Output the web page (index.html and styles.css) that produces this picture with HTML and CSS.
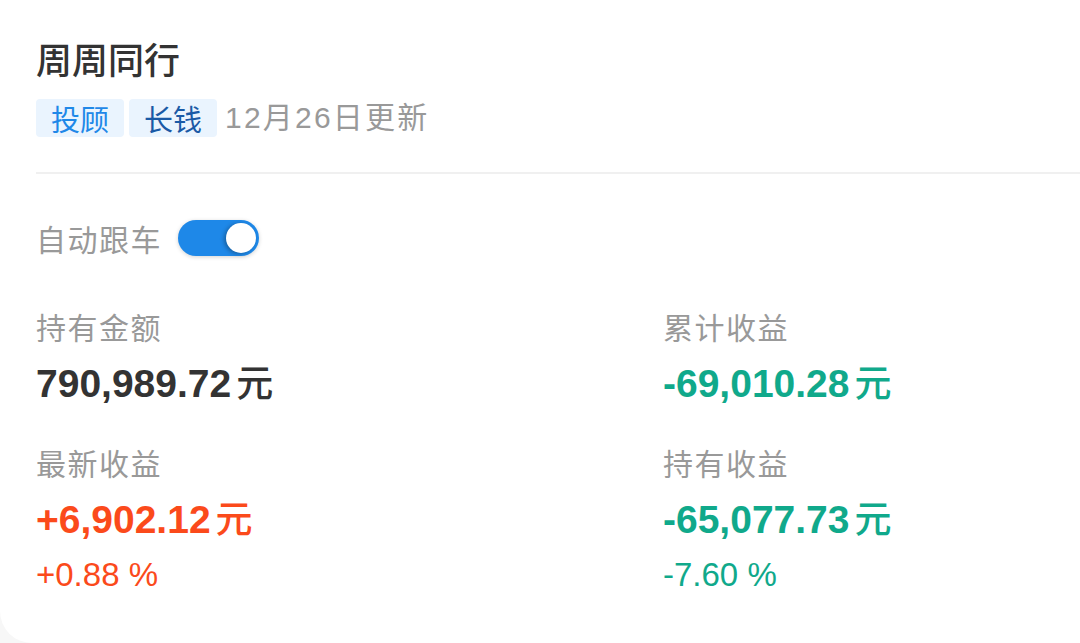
FILE: index.html
```html
<!DOCTYPE html>
<html lang="zh-CN">
<head>
<meta charset="utf-8">
<title>周周同行</title>
<link rel="stylesheet" href="styles.css">
</head>
<body>
<div class="card">
  <h1 class="title">周周同行</h1>
  <div class="meta">
    <span class="tag tag-blue">投顾</span>
    <span class="tag tag-navy">长钱</span>
    <span class="date">12月26日更新</span>
  </div>
  <div class="divider"></div>
  <div class="auto-row">
    <span class="label">自动跟车</span>
    <span class="switch"><span class="knob"></span></span>
  </div>
  <div class="stats">
    <div class="stat">
      <div class="label">持有金额</div>
      <div class="value dark">790,989.72<span class="unit">元</span></div>
    </div>
    <div class="stat">
      <div class="label">累计收益</div>
      <div class="value green">-69,010.28<span class="unit">元</span></div>
    </div>
    <div class="stat">
      <div class="label">最新收益</div>
      <div class="value red">+6,902.12<span class="unit">元</span></div>
      <div class="pct red">+0.88 %</div>
    </div>
    <div class="stat">
      <div class="label">持有收益</div>
      <div class="value green">-65,077.73<span class="unit">元</span></div>
      <div class="pct green">-7.60 %</div>
    </div>
  </div>
</div>
</body>
</html>
```
FILE: styles.css
```css
html, body {
  margin: 0;
  padding: 0;
}
body {
  background: #f7f7f7;
  font-family: "Liberation Sans", "Noto Sans CJK SC", sans-serif;
}
.card {
  box-sizing: border-box;
  width: 1080px;
  height: 643px;
  background: #ffffff;
  border-radius: 0 0 0 32px;
  padding: 40px 0 0 36px;
}
.title {
  margin: 0;
  font-family: "Noto Sans CJK SC", sans-serif;
  font-size: 36px;
  line-height: 1;
  font-weight: 500;
  color: #333333;
}
.meta {
  display: flex;
  align-items: center;
  margin-top: 23px;
}
.tag {
  display: inline-block;
  font-family: "Noto Sans CJK SC", sans-serif;
  font-size: 29px;
  line-height: 38px;
  height: 38px;
  padding: 0 15px;
  background: #eaf4fe;
  border-radius: 4px;
  margin-right: 5px;
}
.tag-blue { color: #1f88e8; }
.tag-navy { color: #1a5aa6; }
.date {
  margin-left: 3px;
  font-family: "Liberation Sans", "Noto Sans CJK SC", sans-serif;
  font-size: 30px;
  letter-spacing: 2.2px;
  color: #999999;
  line-height: 38px;
}
.divider {
  height: 2px;
  background: #f0f0f0;
  margin-top: 35px;
}
.auto-row {
  display: flex;
  align-items: center;
  margin-top: 46px;
  height: 36px;
}
.label {
  font-family: "Noto Sans CJK SC", sans-serif;
  font-size: 30px;
  line-height: 30px;
  letter-spacing: 1.5px;
  color: #999999;
}
.switch {
  box-sizing: border-box;
  display: flex;
  align-items: center;
  justify-content: flex-end;
  width: 81px;
  height: 36px;
  margin-left: 16px;
  padding: 0 3px;
  border-radius: 18px;
  background: #1e88e8;
  box-shadow: 0 1px 4px rgba(0, 0, 0, 0.18);
}
.knob {
  width: 30px;
  height: 30px;
  border-radius: 50%;
  background: #ffffff;
  box-shadow: -2px 1px 4px rgba(0, 0, 0, 0.3);
}
.stats {
  display: grid;
  grid-template-columns: 627px 1fr;
  row-gap: 44px;
  margin-top: 55px;
}
.stat .label {
  display: block;
}
.value {
  margin-top: 22px;
  font-family: "Liberation Sans", sans-serif;
  font-size: 39px;
  font-weight: 700;
  line-height: 40px;
  height: 40px;
  white-space: nowrap;
}
.unit {
  font-family: "Noto Sans CJK SC", sans-serif;
  font-size: 37px;
  font-weight: 500;
  line-height: 1;
  margin-left: 5px;
}
.pct {
  margin-top: 19px;
  font-family: "Liberation Sans", sans-serif;
  font-size: 33px;
  line-height: 33px;
}
.dark { color: #333333; }
.red { color: #fb4a1b; }
.green { color: #10a98b; }
```
